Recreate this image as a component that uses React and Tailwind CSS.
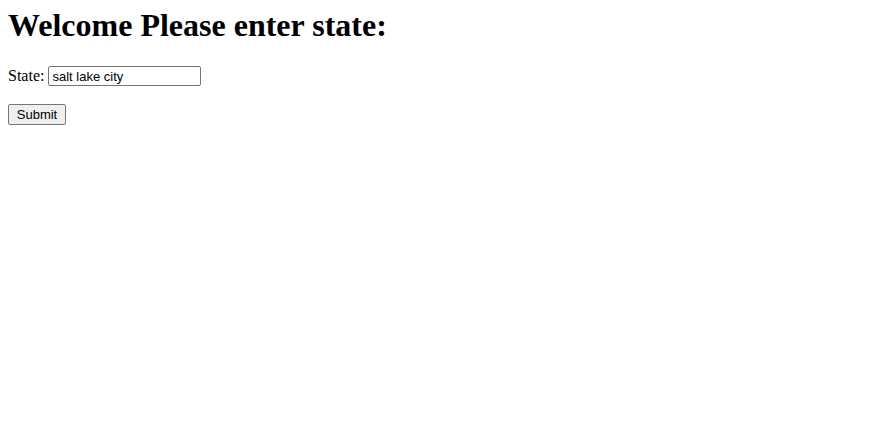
export default function App() {
  return (
    <div className="min-h-[422px] bg-white px-2 pt-[7px] text-black font-['Liberation_Serif',serif]">
      <h1 className="m-0 text-[32px] leading-[36px] font-bold">Welcome Please enter state:</h1>
      <form className="m-0" onSubmit={(e) => e.preventDefault()}>
        <div className="mt-[23px] flex items-center h-[20px]">
          <label className="text-[16px] leading-[20px]">State:</label>
          <input
            type="text"
            defaultValue="salt lake city"
            className="ml-[4px] h-[20px] w-[153px] border border-[#767676] rounded-[2px] px-[3px] text-[13px] font-['Liberation_Sans',sans-serif] text-black outline-none"
          />
        </div>
        <div className="mt-[16px]">
          <button
            type="submit"
            className="h-[21px] w-[58px] border border-[#767676] rounded-[2px] bg-[#efefef] text-[13px] leading-[19px] font-['Liberation_Sans',sans-serif] text-black"
          >
            Submit
          </button>
        </div>
      </form>
    </div>
  );
}
